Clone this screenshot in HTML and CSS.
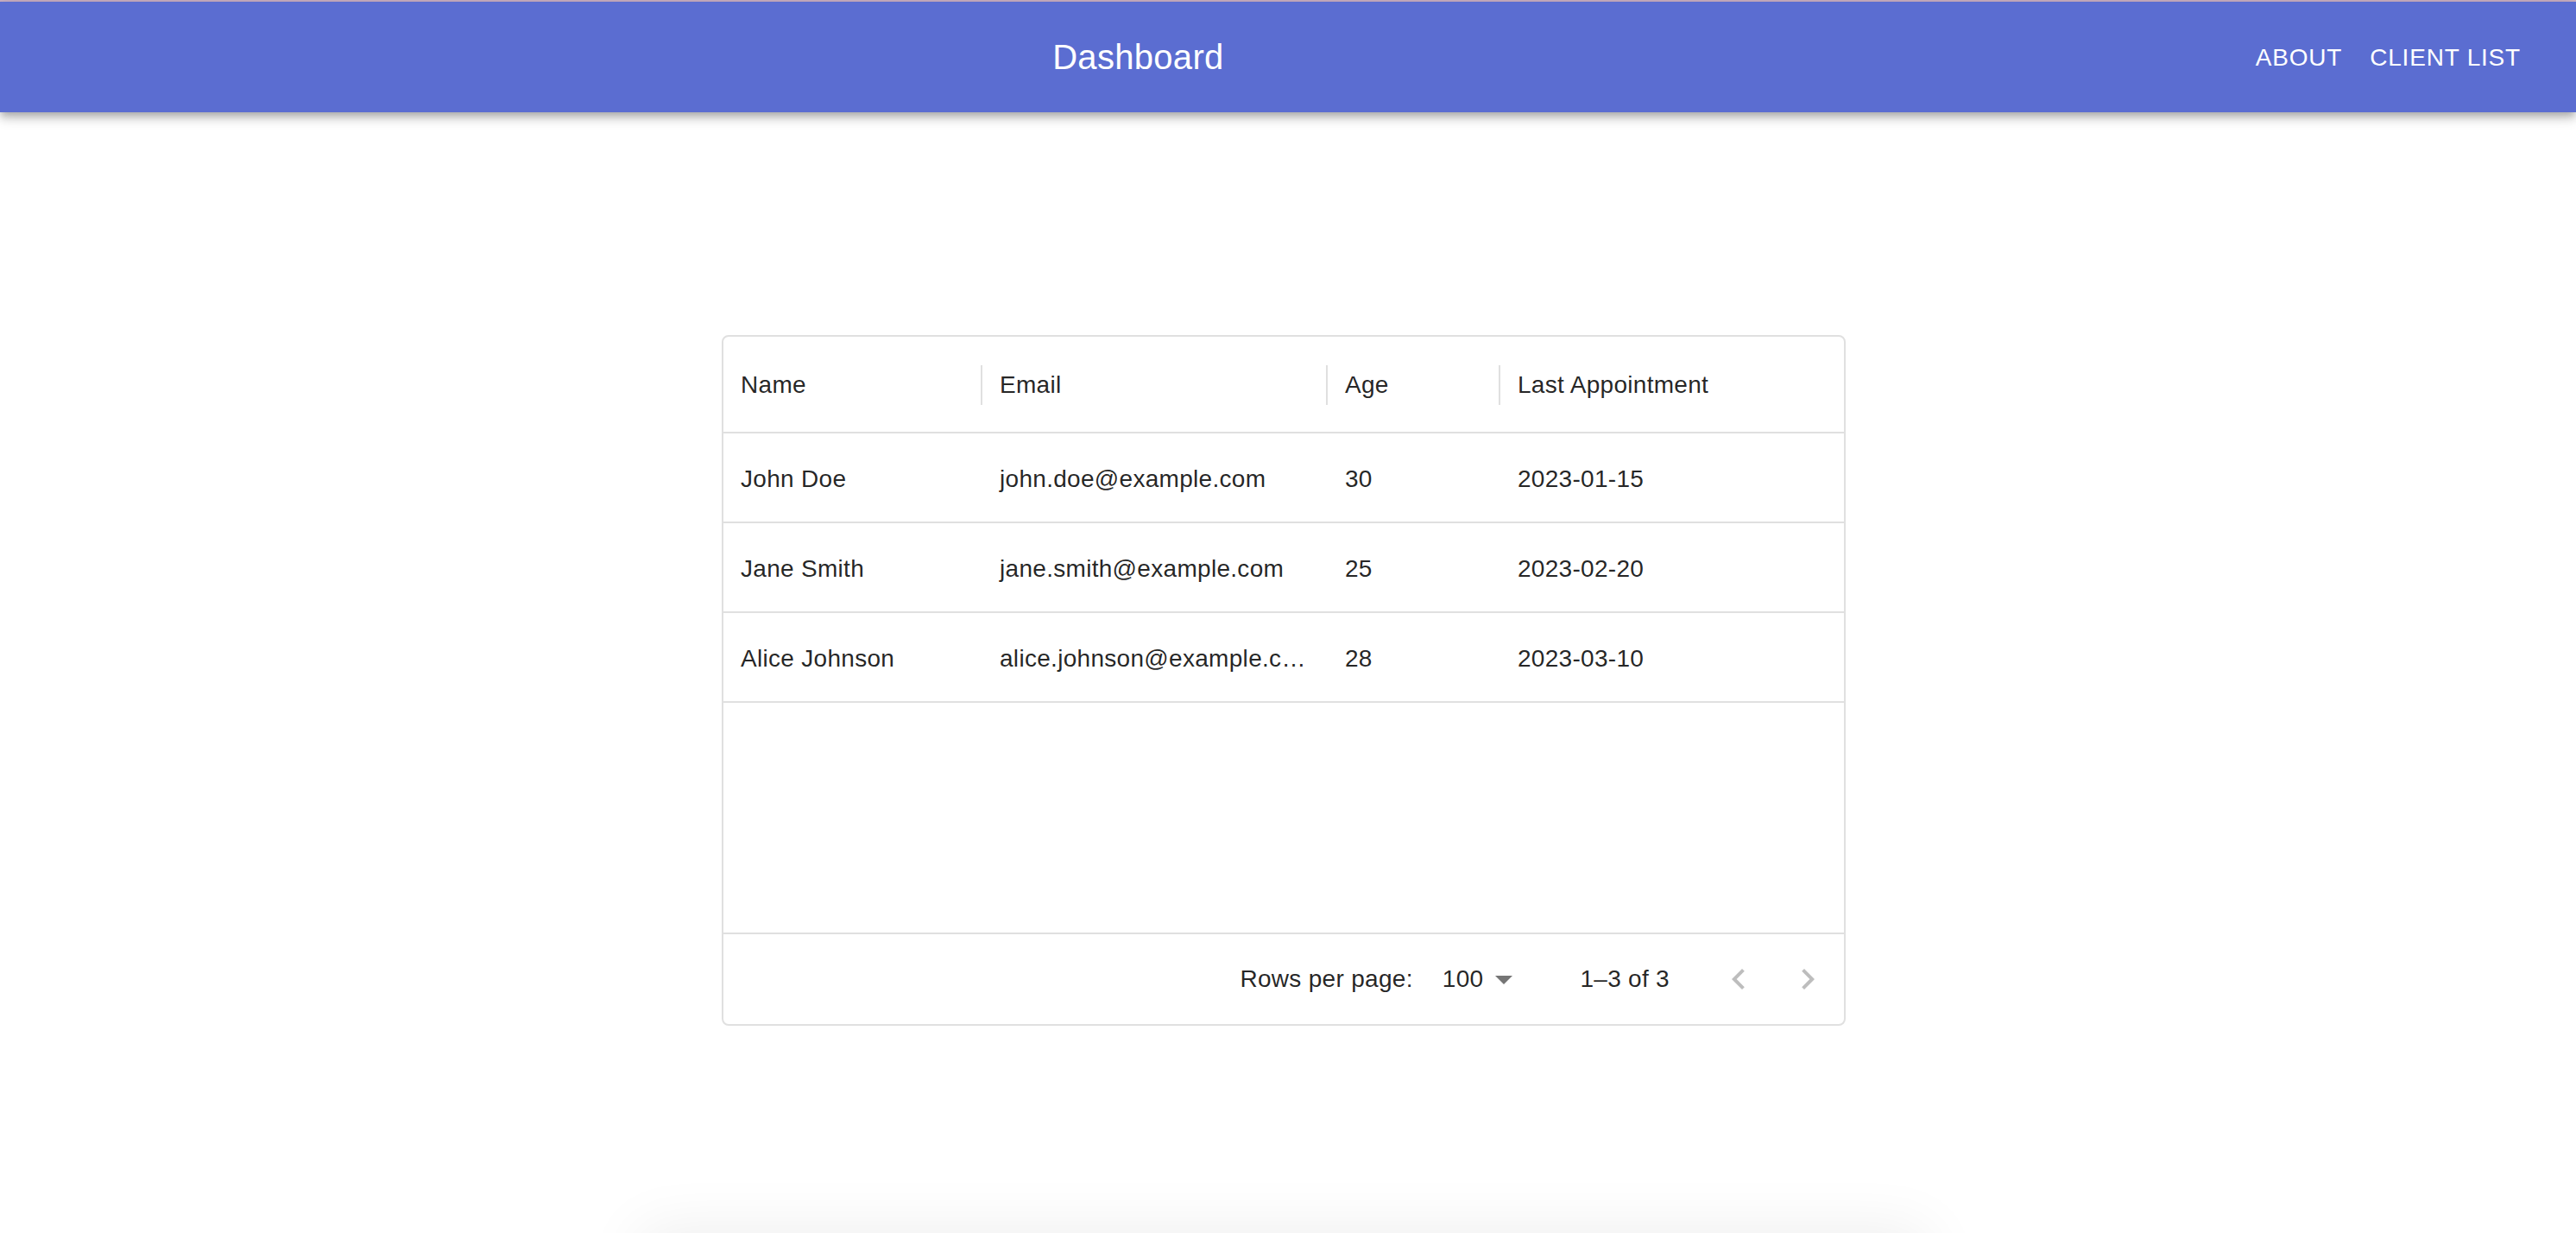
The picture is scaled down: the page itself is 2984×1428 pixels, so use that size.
FILE: index.html
```html
<!DOCTYPE html>
<html lang="en">
<head>
<meta charset="utf-8">
<title>Dashboard</title>
<link rel="stylesheet" href="styles.css">
</head>
<body>
<div class="page">
  <div class="topline"></div>
  <header class="appbar">
    <div class="toolbar">
      <div class="title">Dashboard</div>
      <nav class="nav">
        <a class="navbtn" href="#">About</a>
        <a class="navbtn" href="#">Client List</a>
      </nav>
    </div>
  </header>
  <main class="main">
    <section class="grid-card">
      <div class="grid-row grid-header">
        <div class="hcell"><span class="hlabel">Name</span><span class="sep"></span></div>
        <div class="hcell"><span class="hlabel">Email</span><span class="sep"></span></div>
        <div class="hcell"><span class="hlabel">Age</span><span class="sep"></span></div>
        <div class="hcell"><span class="hlabel">Last Appointment</span></div>
      </div>
      <div class="grid-body">
        <div class="grid-row drow">
          <div class="dcell">John Doe</div>
          <div class="dcell">john.doe@example.com</div>
          <div class="dcell">30</div>
          <div class="dcell">2023-01-15</div>
        </div>
        <div class="grid-row drow">
          <div class="dcell">Jane Smith</div>
          <div class="dcell">jane.smith@example.com</div>
          <div class="dcell">25</div>
          <div class="dcell">2023-02-20</div>
        </div>
        <div class="grid-row drow">
          <div class="dcell">Alice Johnson</div>
          <div class="dcell">alice.johnson@example.com</div>
          <div class="dcell">28</div>
          <div class="dcell">2023-03-10</div>
        </div>
      </div>
      <div class="grid-filler"></div>
      <div class="grid-footer">
        <span class="rpp-label">Rows per page:</span>
        <div class="rpp-select">
          <span>100</span>
          <svg viewBox="0 0 24 24" aria-hidden="true"><path d="M7 10l5 5 5-5z"/></svg>
        </div>
        <span class="rows-shown">1–3 of 3</span>
        <div class="page-actions">
          <button class="icon-btn" disabled aria-label="Go to previous page">
            <svg viewBox="0 0 24 24" aria-hidden="true"><path d="M15.41 16.59 10.83 12l4.58-4.59L14 6l-6 6 6 6z"/></svg>
          </button>
          <button class="icon-btn" disabled aria-label="Go to next page">
            <svg viewBox="0 0 24 24" aria-hidden="true"><path d="M8.59 16.59 13.17 12 8.59 7.41 10 6l6 6-6 6z"/></svg>
          </button>
        </div>
      </div>
    </section>
    <section class="next-paper"></section>
  </main>
</div>
</body>
</html>
```
FILE: styles.css
```css
html, body {
  margin: 0;
  padding: 0;
}

body {
  font-family: "Liberation Sans", Arial, Helvetica, sans-serif;
  color: rgba(0, 0, 0, 0.87);
  background: #ffffff;
}

.page {
  height: 100vh;
  overflow: hidden;
  display: flex;
  flex-direction: column;
}

.topline {
  height: 2px;
  flex-shrink: 0;
  background: #cbb0c4;
}

.appbar {
  position: relative;
  z-index: 1;
  flex-shrink: 0;
  background: #5b6dd1;
  color: #ffffff;
  box-shadow: 0 4px 8px -2px rgba(0, 0, 0, 0.2), 0 8px 10px 0 rgba(0, 0, 0, 0.14), 0 2px 20px 0 rgba(0, 0, 0, 0.12);
}

.toolbar {
  height: 128px;
  display: flex;
  align-items: center;
  padding: 0 48px;
}

.title {
  flex: 1;
  text-align: center;
  padding-right: 8px;
  font-size: 40px;
  line-height: 1.6;
  letter-spacing: 0.3px;
}

.nav {
  display: flex;
}

.navbtn {
  padding: 12px 16px;
  font-size: 28px;
  line-height: 1.75;
  letter-spacing: 0.8px;
  text-transform: uppercase;
  color: #ffffff;
  text-decoration: none;
}

.main {
  flex: 1;
  display: flex;
  flex-direction: column;
  align-items: center;
  padding-top: 258px;
  padding-right: 10px;
}

.grid-card {
  flex-shrink: 0;
  width: 1302px;
  height: 800px;
  box-sizing: border-box;
  border: 2px solid #e0e0e0;
  border-radius: 8px;
  display: flex;
  flex-direction: column;
  font-size: 28px;
  letter-spacing: 0.3px;
}

.grid-row {
  display: grid;
  grid-template-columns: 300px 400px 200px 1fr;
}

.grid-header {
  height: 112px;
  box-sizing: border-box;
  border-bottom: 2px solid #e0e0e0;
}

.hcell {
  display: flex;
  align-items: center;
  padding-left: 20px;
  padding-top: 2px;
}

.hlabel {
  flex: 1;
  white-space: nowrap;
}

.sep {
  width: 2px;
  height: 46px;
  background: #e0e0e0;
}

.drow {
  height: 104px;
  box-sizing: border-box;
  border-bottom: 2px solid #e0e0e0;
}

.dcell {
  padding: 4px 22px 0 20px;
  line-height: 98px;
  overflow: hidden;
  white-space: nowrap;
  text-overflow: ellipsis;
}

.grid-filler {
  flex: 1;
}

.grid-footer {
  height: 106px;
  box-sizing: border-box;
  border-top: 2px solid #e0e0e0;
  display: flex;
  align-items: center;
  justify-content: flex-end;
  padding-right: 2px;
}

.rpp-select {
  display: flex;
  align-items: center;
  margin-left: 34px;
  margin-right: 64px;
}

.rpp-select svg {
  width: 48px;
  height: 48px;
  fill: rgba(0, 0, 0, 0.54);
}

.page-actions {
  display: flex;
  margin-left: 40px;
}

.icon-btn {
  width: 80px;
  height: 80px;
  padding: 0;
  border: 0;
  background: none;
  display: flex;
  align-items: center;
  justify-content: center;
}

.icon-btn svg {
  width: 48px;
  height: 48px;
  fill: rgba(0, 0, 0, 0.26);
}

.next-paper {
  flex-shrink: 0;
  width: 1480px;
  height: 400px;
  margin-top: 248px;
  border-radius: 8px;
  background: #ffffff;
  box-shadow: 0 -6px 70px 6px rgba(0, 0, 0, 0.07);
}
```
